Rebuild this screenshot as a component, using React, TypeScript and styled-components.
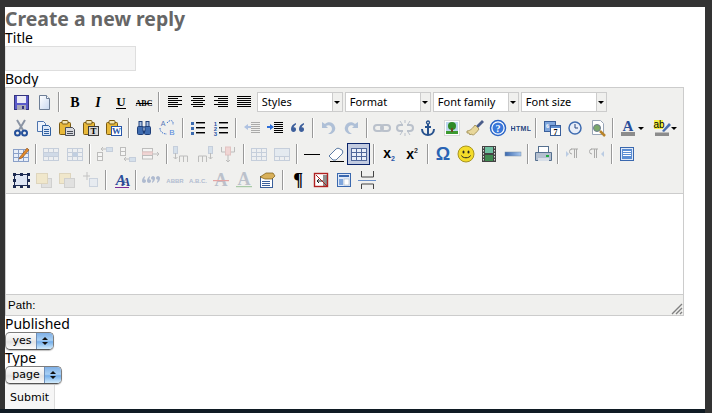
import React from "react";
import styled, { createGlobalStyle } from "styled-components";

const Global = createGlobalStyle`
  html, body { margin: 0; padding: 0; height: 413px; overflow: hidden; background: #333333; }
`;

const Screen = styled.div`
  width: 712px; height: 413px; box-sizing: border-box;
  display: flex; flex-direction: column;
  font-family: "Noto Sans", "DejaVu Sans", sans-serif; color: #000;
`;
const TopBand = styled.div`height: 7px; background: #333333; flex: none;`;
const Middle = styled.div`flex: 1; display: flex; min-height: 0;`;
const Gutter = styled.div<{ $w: number }>`width: ${p => p.$w}px; background: #333333; flex: none;`;
const Page = styled.main`
  flex: 1; background: #fff; display: flex; flex-direction: column; align-items: flex-start; min-width: 0;
  & > * { flex: none; }
`;
const BottomBand = styled.div`height: 4px; background: #101b24; flex: none; margin-right: 7px;`;

const Heading = styled.h1`
  margin: 0; height: 23px; font-size: 19.4px; line-height: 23px; font-weight: 700; color: #666;
`;
const Label = styled.label`display: block; font-size: 14px; line-height: 16px; height: 16px;`;
const TitleInput = styled.input`
  display: block; box-sizing: border-box; width: 131px; height: 25px; margin: 0;
  background: #f4f4f4; border: 1px solid #dedede; padding: 0;
`;
const Editor = styled.div`
  width: 679px; box-sizing: border-box; height: 229px;
  border: 1px solid #ccc; display: flex; flex-direction: column;
`;
const Toolbar = styled.div`
  background: #f0f0ee; height: 106px; flex: none; box-sizing: border-box;
  border-bottom: 1px solid #ccc; padding: 1px 0 0 3.4px;
`;
const Row = styled.div`display: flex; align-items: center; height: 26px;`;
const Btn = styled.span<{ $on?: boolean; $off?: boolean }>`
  width: 23.2px; height: 22px; flex: none; box-sizing: border-box;
  display: flex; align-items: center; justify-content: center;
  ${p => p.$on && "background: #c2cbe0; border: 1px solid #0a246a;"}
  svg { opacity: ${p => (p.$off ? 0.36 : 1)}; display: block; flex: none; }
`;
const Sep = styled.span`
  width: 2px; height: 20px; flex: none; margin: 0 2.6px 0 2.7px;
  border-left: 1px solid #999; border-right: 1px solid #fff; box-sizing: border-box;
`;
const Arrow = styled.span`
  width: 0; height: 0; flex: none; margin: 0 6px 0 -2px;
  border: 3px solid transparent; border-top: 3px solid #000; border-bottom: 0;
`;
const ListBox = styled.span`
  display: flex; width: 86px; height: 20px; flex: none; margin-left: 2px;
  ${Btn} + & { margin-left: 1px; }
`;
const ListText = styled.span`
  width: 76px; box-sizing: border-box; background: #fff; border: 1px solid #ccc;
  font-size: 11px; line-height: 18px; padding-left: 4px; white-space: nowrap; overflow: hidden;
`;
const ListOpen = styled.span`
  width: 10px; box-sizing: border-box; background: #f0f0ee; border: 1px solid #ccc; border-left: 0;
  display: flex; align-items: center; justify-content: center;
  &::after { content: ""; border: 3px solid transparent; border-top: 3px solid #000; border-bottom: 0; }
`;
const Canvas = styled.div`flex: 1; background: #fff;`;
const Status = styled.div`
  height: 21px; flex: none; background: #f0f0ee; border-top: 1px solid #ccc; box-sizing: border-box;
  display: flex; align-items: center; position: relative;
  font-family: "Liberation Sans", Arial, sans-serif; font-size: 11.5px; padding-left: 2px;
  letter-spacing: 0.15px;
`;
const Grip = styled.svg`position: absolute; right: 0; bottom: 0; display: block;`;
const AquaSelect = styled.span<{ $w: number }>`
  display: flex; width: ${p => p.$w}px; height: 18px; box-sizing: border-box;
  border-radius: 5px; border: 1px solid #7d7d7d; border-bottom-color: #555; overflow: hidden;
  background: linear-gradient(#fdfdfd, #ececec 45%, #e2e2e2 55%, #fbfbfb);
  box-shadow: 0 1px 1px rgba(0, 0, 0, 0.25);
  font-family: "DejaVu Sans", sans-serif; font-size: 11px;
`;
const AquaText = styled.span`flex: 1; text-align: center; line-height: 16px; padding-left: 2px;`;
const AquaStep = styled.span`
  width: 16px; flex: none; display: flex; flex-direction: column; align-items: center; justify-content: center; gap: 2px;
  background: linear-gradient(#7fb0e6, #a9d0f4 45%, #74aeea 55%, #d2ecfd);
  border-left: 1px solid #6f8fb8;
  &::before { content: ""; border: 3px solid transparent; border-bottom: 3px solid #111; border-top: 0; }
  &::after { content: ""; border: 3px solid transparent; border-top: 3px solid #111; border-bottom: 0; }
`;
const Submit = styled.button`
  width: 50px; height: 24px; margin: 1px 0 0; padding: 0; background: #f6f6f6; border: 0; border-right: 1px solid #dcdcdc;
  font-family: "DejaVu Sans", sans-serif; font-size: 11px; color: #000;
`;
const Glyph = styled.text<{ $f?: string }>`font-family: ${p => p.$f || '"Liberation Serif", serif'};`;
const SANS = '"Liberation Sans", sans-serif';

type IconBody = React.ReactNode;
const lines = (rows: [number, number, number][], c = "#000") =>
  rows.map(([x, y, w], i) => <rect key={i} x={x} y={y} width={w} height={1} fill={c} />);
const clipBoard = (
  <>
    <rect x="2.5" y="4.5" width="11" height="12" rx="1" fill="#e8b93a" stroke="#7a5a12" />
    <rect x="5" y="2.5" width="6" height="3.5" rx="1" fill="#f4e6b0" stroke="#7a5a12" />
  </>
);
const miniTable = (x: number, y: number, c = "#8aa0c8") => (
  <g stroke={c} fill="#fff">
    <rect x={x + 0.5} y={y + 0.5} width="15" height="12" fill="#e8eef8" />
    <path d={`M${x} ${y + 4.5}h16M${x} ${y + 8.5}h16M${x + 5.5} ${y}v13M${x + 10.5} ${y}v13`} fill="none" />
  </g>
);

const ICONS: Record<string, IconBody> = {
  save: (
    <>
      <rect x="3.5" y="3.5" width="14" height="14" fill="#5b5bc9" stroke="#34347e" />
      <rect x="6" y="4" width="9" height="7" fill="#ececf6" />
      <rect x="6" y="13" width="9" height="5" fill="#a9a9b6" />
      <rect x="11" y="14" width="2" height="3" fill="#34347e" />
    </>
  ),
  doc: (
    <>
      <path d="M5.5 3.5h7l3 3v11h-10z" fill="url(#docg)" stroke="#6d7e96" />
      <path d="M12.5 3.5v3h3" fill="#fff" stroke="#6d7e96" />
    </>
  ),
  bold: <Glyph x="10" y="15" fontSize="14" fontWeight="700" textAnchor="middle">B</Glyph>,
  italic: <Glyph x="10" y="15" fontSize="14" fontWeight="700" fontStyle="italic" textAnchor="middle">I</Glyph>,
  under: (
    <>
      <Glyph x="10" y="14" fontSize="13" fontWeight="700" textAnchor="middle">U</Glyph>
      <rect x="5" y="16" width="10" height="1" fill="#000" />
    </>
  ),
  strike: (
    <>
      <Glyph x="10" y="14" fontSize="8" textAnchor="middle" fontWeight="700">ABC</Glyph>
      <rect x="2" y="11" width="16" height="1" fill="#000" />
    </>
  ),
  left: <>{lines([[3, 4, 14], [3, 6, 10], [3, 8, 14], [3, 10, 10], [3, 12, 14], [3, 14, 10]])}</>,
  center: <>{lines([[3, 4, 14], [5, 6, 10], [3, 8, 14], [5, 10, 10], [3, 12, 14], [5, 14, 10]])}</>,
  right: <>{lines([[3, 4, 14], [7, 6, 10], [3, 8, 14], [7, 10, 10], [3, 12, 14], [7, 14, 10]])}</>,
  justify: <>{lines([[3, 4, 14], [3, 6, 14], [3, 8, 14], [3, 10, 14], [3, 12, 14], [3, 14, 14]])}</>,
  cut: (
    <g fill="none">
      <path d="M6 2l6 10M14 2L8 12" stroke="#8a94a4" strokeWidth="2" />
      <circle cx="6.5" cy="15" r="2.5" stroke="#24509a" strokeWidth="2" />
      <circle cx="13.5" cy="15" r="2.5" stroke="#24509a" strokeWidth="2" />
    </g>
  ),
  copy: (
    <>
      <path d="M3.5 3.5h6l2 2v8h-8z" fill="#eef3fb" stroke="#4d74ae" />
      <path d="M8.5 7.5h6l2 2v8h-8z" fill="#dce8f8" stroke="#30609f" />
      {lines([[10, 11, 5], [10, 13, 5], [10, 15, 5]], "#30609f")}
    </>
  ),
  paste: (
    <>
      {clipBoard}
      <path d="M8.5 9.5h7l2 2v6h-9z" fill="#d7d9de" stroke="#4a4e58" />
      {lines([[10, 13, 6], [10, 15, 6]], "#4a4e58")}
    </>
  ),
  pastet: (
    <>
      {clipBoard}
      <rect x="7.5" y="8.5" width="10" height="9" fill="#d7d7d7" stroke="#3c3c3c" />
      <Glyph x="12.5" y="16" fontSize="9" fontWeight="700" textAnchor="middle">T</Glyph>
    </>
  ),
  pastew: (
    <>
      {clipBoard}
      <rect x="7.5" y="8.5" width="10" height="9" fill="#fff" stroke="#2a56a8" />
      <Glyph x="12.5" y="16" fontSize="9" fontWeight="700" textAnchor="middle" fill="#2a56a8">W</Glyph>
    </>
  ),
  find: (
    <g stroke="#1f3f78">
      <rect x="3.5" y="8.5" width="6" height="8" fill="#3f6cb0" rx="1" />
      <rect x="10.5" y="8.5" width="6" height="8" fill="#3f6cb0" rx="1" />
      <rect x="5" y="3.5" width="3" height="5" fill="#a8c0e4" />
      <rect x="12" y="3.5" width="3" height="5" fill="#a8c0e4" />
      <rect x="9" y="9" width="2" height="4" fill="#dfe8f6" />
    </g>
  ),
  replace: (
    <>
      <Glyph x="6" y="8" fontSize="7" textAnchor="middle" fill="#5577b8" $f={SANS}>A</Glyph>
      <Glyph x="15" y="17" fontSize="8" textAnchor="middle" fill="#4f86dc" $f={SANS}>B</Glyph>
      <path d="M3 10c0 4 3 6 7 6M10 5c2-3 5-3 6-1v3" fill="none" stroke="#3f73cc" strokeDasharray="1.5 1" />
    </>
  ),
  ul: (
    <>
      {[4, 9, 14].map(y => <rect key={y} x="3" y={y} width="3" height="3" fill="#3c6bb0" />)}
      {lines([[8, 4, 9], [8, 9, 9], [8, 14, 9]])}
      {lines([[8, 5, 9], [8, 10, 9], [8, 15, 9]], "#888")}
    </>
  ),
  ol: (
    <>
      <Glyph x="4.5" y="8" fontSize="6" fontWeight="700" textAnchor="middle" fill="#2a56a8" $f={SANS}>1</Glyph>
      <Glyph x="4.5" y="13" fontSize="6" fontWeight="700" textAnchor="middle" fill="#2a56a8" $f={SANS}>2</Glyph>
      <Glyph x="4.5" y="18" fontSize="6" fontWeight="700" textAnchor="middle" fill="#2a56a8" $f={SANS}>3</Glyph>
      {lines([[8, 4, 9], [8, 9, 9], [8, 14, 9]])}
      {lines([[8, 5, 9], [8, 10, 9], [8, 15, 9]], "#888")}
    </>
  ),
  outdent: (
    <>
      {lines([[9, 4, 9], [9, 6, 9], [9, 8, 9], [9, 10, 9], [9, 12, 9], [9, 14, 9]], "#333")}
      <path d="M2 9l4-3v2h3v2H6v2z" fill="#3f73cc" />
    </>
  ),
  indent: (
    <>
      {lines([[9, 4, 9], [9, 6, 9], [9, 8, 9], [9, 10, 9], [9, 12, 9], [9, 14, 9]])}
      <path d="M9 9L5 6v2H2v2h3v2z" fill="#2f6fd8" />
    </>
  ),
  quote: (
    <path d="M8 5C5 6 3 8 3 11c0 2 1 3 2.5 3S8 13 8 11.5 7 9 5.5 9.500C6 8 7 7 8 6.500zM16 5c-3 1-5 3-5 6 0 2 1 3 2.500 3s2.500-1 2.500-2.500S15 9 13.500 9.500c.5-1.500 1.500-2.500 2.500-3z" fill="#3d5f9c" />
  ),
  undo: <path d="M4 4v6h6L8 8c3-2 6 0 6 3 0 2-2 4-4 5h3c3-1 5-4 4-7-1-5-7-6-10-3z" fill="#3f6db0" />,
  redo: <path d="M16 4v6h-6l2-2c-3-2-6 0-6 3 0 2 2 4 4 5H7C4 15 2 12 3 9c1-5 7-6 10-3z" fill="#3f6db0" />,
  link: (
    <g fill="none" stroke="#5c6f90" strokeWidth="2">
      <rect x="2" y="7" width="9" height="6" rx="3" />
      <rect x="9" y="7" width="9" height="6" rx="3" />
    </g>
  ),
  unlink: (
    <g fill="none" stroke="#5c6f90">
      <path d="M8 7H5a3 3 0 000 6h3M12 7h3a3 3 0 010 6h-3" strokeWidth="2" />
      <path d="M10 2v3M10 15v3M5 3l2 3M15 3l-2 3M5 17l2-3M15 17l-2-3" />
    </g>
  ),
  anchor: (
    <g fill="none" stroke="#27528e" strokeWidth="2">
      <circle cx="10" cy="4.500" r="1.500" strokeWidth="1.300" />
      <path d="M10 6v11M7 9h6M4 11c0 4 3 6 6 6s6-2 6-6" />
    </g>
  ),
  image: (
    <>
      <rect x="2.5" y="2.500" width="15" height="15" fill="#fff" stroke="#d8d8d8" />
      <rect x="4" y="4" width="12" height="12" fill="#bcd6ee" />
      <rect x="4" y="13" width="12" height="3" fill="#3c9a30" />
      <circle cx="10" cy="8" r="4" fill="#2f8b28" />
      <rect x="9" y="10" width="2" height="4" fill="#6a4a22" />
    </>
  ),
  clean: (
    <>
      <path d="M11 8l6-6 2 2-6 6z" fill="#4a5d8a" />
      <path d="M2 13c3 0 6-3 8-6l4 4c-2 3-5 6-6 6l-2-1-1 1-1-2-2 0z" fill="#e8d79a" stroke="#a89860" />
    </>
  ),
  help: (
    <>
      <circle cx="10" cy="10" r="7.500" fill="#fff" stroke="#2a64c6" strokeWidth="1.500" />
      <circle cx="10" cy="10" r="5.500" fill="#3a78da" />
      <Glyph x="10" y="14" fontSize="10" fontWeight="700" textAnchor="middle" fill="#fff">?</Glyph>
    </>
  ),
  html: <Glyph x="10" y="12.500" fontSize="7" fontWeight="700" textAnchor="middle" fill="#27457f" $f={SANS} letterSpacing="0.4">HTML</Glyph>,
  date: (
    <>
      <rect x="2.500" y="3.500" width="11" height="10" fill="#7fa6dc" stroke="#3a5f9a" />
      <rect x="8.500" y="7.500" width="10" height="10" fill="#fff" stroke="#3a5f9a" />
      <rect x="9" y="8" width="9" height="2" fill="#5f8fd0" />
      <Glyph x="13.500" y="17" fontSize="8" fontWeight="700" textAnchor="middle">7</Glyph>
      <Glyph x="5.500" y="10" fontSize="6" fontWeight="700" textAnchor="middle" fill="#fff">6</Glyph>
    </>
  ),
  time: (
    <>
      <circle cx="10" cy="10" r="6" fill="#e8eef8" stroke="#3f6cb0" strokeWidth="1.500" />
      <path d="M10 6v4h3" fill="none" stroke="#27457f" />
    </>
  ),
  preview: (
    <>
      <path d="M4.500 2.500h8l3 3v11h-11z" fill="#fff" stroke="#9aa6b8" />
      <circle cx="9" cy="10" r="3.500" fill="#7aa86a" stroke="#6d7c90" />
      <path d="M12 13l5 5" stroke="#b8842a" strokeWidth="2.500" />
    </>
  ),
  fore: (
    <>
      <Glyph x="10" y="13" fontSize="15" fontWeight="700" textAnchor="middle" fill="#2a4e9a">A</Glyph>
      <rect x="3" y="14" width="14" height="4" fill="#8c8c8c" />
    </>
  ),
  back: (
    <>
      <rect x="2" y="2" width="9" height="9" fill="#f4f040" />
      <Glyph x="7" y="10" fontSize="10" textAnchor="middle" $f={SANS}>ab</Glyph>
      <path d="M10 13l7-8 2 2-7 7z" fill="#4a6fae" />
      <rect x="3" y="14.500" width="14" height="3.500" fill="#8c8c8c" />
    </>
  ),
  tablecontrols: (
    <>
      {miniTable(2, 5)}
      <path d="M9 13L16 4l2 2-7 8-3 1z" fill="#e08a2a" stroke="#8a4a1a" strokeWidth="0.600" />
    </>
  ),
  rowprops: (
    <>
      {miniTable(2, 4, "#7a93bb")}
      <rect x="3" y="9" width="14" height="3" fill="#9ab6dc" />
    </>
  ),
  cellprops: (
    <>
      {miniTable(2, 4, "#7a93bb")}
      <rect x="8" y="9" width="5" height="3" fill="#6f96cc" />
    </>
  ),
  rowbefore: (
    <g stroke="#666" fill="#fff">
      <rect x="2.500" y="8.500" width="5" height="4" /><rect x="2.500" y="12.500" width="5" height="4" />
      <rect x="11.500" y="3.500" width="6" height="4" fill="#a8c4e8" stroke="#7a93bb" />
      <path d="M11 5H6M8 3L6 5l2 2" fill="none" />
    </g>
  ),
  rowafter: (
    <g stroke="#666" fill="#fff">
      <rect x="2.500" y="3.500" width="5" height="4" /><rect x="2.500" y="7.500" width="5" height="4" />
      <rect x="11.500" y="13.500" width="6" height="4" fill="#a8c4e8" stroke="#7a93bb" />
      <path d="M11 15H6M8 13l-2 2 2 2" fill="none" />
    </g>
  ),
  rowdel: (
    <g stroke="#666" fill="#fff">
      <rect x="1.500" y="4.500" width="10" height="3.500" /><rect x="1.500" y="8" width="10" height="3.500" fill="#f0a8a8" stroke="#c77" /><rect x="1.500" y="11.500" width="10" height="3.500" />
      <path d="M11 10h7M16 8l2 2-2 2" fill="none" />
    </g>
  ),
  colbefore: (
    <g stroke="#666" fill="#fff">
      <path d="M7.500 18v-6h4v6M11.500 12h4v6" fill="none" />
      <rect x="1.500" y="2.500" width="4" height="7" fill="#a8c4e8" stroke="#7a93bb" />
      <path d="M3.500 9v6M1.500 13l2 2 2-2" fill="none" />
    </g>
  ),
  colafter: (
    <g stroke="#666" fill="#fff">
      <path d="M3.500 18v-6h4v6M7.500 12h4v6" fill="none" />
      <rect x="13.500" y="2.500" width="4" height="7" fill="#a8c4e8" stroke="#7a93bb" />
      <path d="M15.500 9v6M13.500 13l2 2 2-2" fill="none" />
    </g>
  ),
  coldel: (
    <g stroke="#666" fill="none">
      <path d="M3.500 3v5h4M16.500 3v5h-4" />
      <rect x="7.500" y="3" width="5" height="8" fill="#f0a8a8" stroke="#c77" />
      <path d="M10 11v7M8 16l2 2 2-2" />
    </g>
  ),
  split: <>{miniTable(2, 4, "#7a93bb")}</>,
  merge: (
    <>
      {miniTable(2, 4, "#7a93bb")}
      <rect x="3" y="5" width="14" height="7" fill="#cfe0f4" />
    </>
  ),
  hr: <rect x="2" y="10" width="16" height="1" fill="#000" />,
  erase: (
    <>
      <path d="M3 12l7-7c1-1 3-1 4 0l2 1c1 1 1 3 0 4l-6 6H7z" fill="#fff" stroke="#5b7aa4" />
      <rect x="4" y="17" width="14" height="1" fill="#000" />
    </>
  ),
  aid: miniTable(2, 4, "#50679a"),
  sub: (
    <Glyph x="10" y="14" fontSize="14" fontWeight="700" textAnchor="middle" $f={SANS}>
      x<tspan fontSize="7" dy="3" fill="#2a56a8">2</tspan>
    </Glyph>
  ),
  sup: (
    <Glyph x="10" y="15" fontSize="14" fontWeight="700" textAnchor="middle" $f={SANS}>
      x<tspan fontSize="7" dy="-6" fill="#333">2</tspan>
    </Glyph>
  ),
  omega: <Glyph x="10" y="16" fontSize="18" fontWeight="700" textAnchor="middle" fill="#2a64b4" $f={SANS}>Ω</Glyph>,
  smile: (
    <>
      <circle cx="10" cy="10" r="8" fill="#f4dc2a" stroke="#a89520" />
      <ellipse cx="7.500" cy="8" rx="1" ry="1.500" fill="#222" />
      <ellipse cx="12.500" cy="8" rx="1" ry="1.500" fill="#222" />
      <path d="M5.500 11.500c1 3 8 3 9 0" fill="none" stroke="#222" />
    </>
  ),
  media: (
    <>
      <rect x="3" y="2" width="14" height="16" fill="#444" />
      <rect x="6" y="3" width="8" height="6" fill="#6fc0a0" />
      <rect x="6" y="11" width="8" height="6" fill="#3f8a50" />
      {[3, 6, 9, 12, 15].map(y => <React.Fragment key={y}><rect x="4" y={y} width="1" height="1.500" fill="#ddd" /><rect x="15" y={y} width="1" height="1.500" fill="#ddd" /></React.Fragment>)}
    </>
  ),
  print: (
    <>
      <rect x="5.500" y="2.500" width="10" height="6" fill="#fff" stroke="#56708f" />
      <path d="M2.500 8.500h16v8h-16z" fill="#b4c0d0" stroke="#56708f" />
      <rect x="5" y="14" width="11" height="3" fill="#d8dfe8" />
      <rect x="13" y="11" width="3" height="2" fill="#22aa44" />
    </>
  ),
  ltr: (
    <>
      <path d="M3 7l3 3-3 3z" fill="#5f8fd0" />
      <path d="M8 5h7M9 5a2.500 2.500 0 000 5M11.500 5v9M13.500 5v9" fill="none" stroke="#333" />
    </>
  ),
  rtl: (
    <>
      <path d="M17 7l-3 3 3 3z" fill="#5f8fd0" />
      <path d="M4 5h7M5 5a2.500 2.500 0 000 5M7.500 5v9M9.500 5v9" fill="none" stroke="#333" />
    </>
  ),
  full: (
    <>
      <rect x="3.500" y="3.500" width="13" height="13" fill="#dfe9f8" stroke="#3a68ae" />
      <rect x="5" y="5" width="10" height="10" fill="#5b8ed4" />
      {lines([[6, 7, 8], [6, 9, 8], [6, 11, 8]], "#fff")}
    </>
  ),
  box: (
    <>
      <rect x="3.500" y="4.500" width="13" height="11" fill="#dfe6f4" stroke="#1d2a50" />
      {[[2, 3], [9, 3], [16, 3], [2, 9], [16, 9], [2, 15], [9, 15], [16, 15]].map(([x, y]) => <rect key={`${x}${y}`} x={x} y={y} width="3" height="3" fill="#1d2a50" />)}
    </>
  ),
  front: (
    <>
      <rect x="7.500" y="8.500" width="10" height="9" fill="#c8c8c8" stroke="#999" />
      <rect x="2.500" y="3.500" width="11" height="10" fill="#f0d890" stroke="#c0a868" />
    </>
  ),
  backw: (
    <>
      <rect x="2.500" y="3.500" width="11" height="10" fill="#f0d890" stroke="#c0a868" />
      <rect x="7.500" y="8.500" width="10" height="9" fill="#c8c8c8" stroke="#999" />
    </>
  ),
  abs: (
    <>
      <path d="M2 6h7M6 2v8" stroke="#777" fill="none" />
      <rect x="8.500" y="8.500" width="8" height="8" fill="#d8e4f4" stroke="#8aa0c0" />
    </>
  ),
  style: (
    <>
      <Glyph x="10" y="15" fontSize="15" fontWeight="700" fontStyle="italic" fill="#2a4e9a" textAnchor="middle" letterSpacing="-4">
        A<tspan fontSize="13" dy="1" fill="#2a3e8a">A</tspan>
      </Glyph>
      <rect x="4" y="17" width="14" height="1" fill="#7a2a9a" />
    </>
  ),
  cite: (
    <>
      <path d="M7 6c-2 1-3 3-3 5 0 1 1 2 2 2s2-1 2-2-1-2-2-1.500L7 7zM12 6c-2 1-3 3-3 5 0 1 1 2 2 2s2-1 2-2-1-2-2-1.500L12 7z" fill="#3f5f9c" transform="translate(-3 0)" />
      <path d="M13 13c2-1 3-3 3-5 0-1-1-2-2-2s-2 1-2 2 1 2 2 1.500l-1 2.500zM18 13c2-1 3-3 3-5 0-1-1-2-2-2s-2 1-2 2 1 2 2 1.500l-1 2.500z" fill="#3f5f9c" transform="translate(-2 0)" />
    </>
  ),
  abbr: <Glyph x="10" y="12.500" fontSize="6" fontWeight="700" textAnchor="middle" fill="#3f5f9c" $f={SANS}>ABBR</Glyph>,
  acro: <Glyph x="10" y="12.500" fontSize="6" fontWeight="700" textAnchor="middle" fill="#3f5f9c" $f={SANS}>A.B.C.</Glyph>,
  del: (
    <>
      <Glyph x="10" y="16" fontSize="18" fontWeight="700" textAnchor="middle" fill="#5f6f90">A</Glyph>
      <rect x="2" y="10" width="16" height="1.200" fill="#d02020" />
    </>
  ),
  ins: (
    <>
      <Glyph x="10" y="15" fontSize="18" fontWeight="700" textAnchor="middle" fill="#5f6f90">A</Glyph>
      <rect x="2" y="16" width="16" height="1.200" fill="#2a8a2a" />
    </>
  ),
  attr: (
    <>
      <rect x="3.500" y="6.500" width="12" height="11" fill="#fff" stroke="#3a5f9a" />
      <path d="M3 7l6-4h7l2 3-3 3H8z" fill="#d8b05a" stroke="#7a5a12" strokeWidth="0.700" />
      {lines([[5, 11, 8], [5, 13, 8], [5, 15, 8]], "#3a5f9a")}
    </>
  ),
  para: <Glyph x="10" y="16" fontSize="18" fontWeight="700" textAnchor="middle">¶</Glyph>,
  nbsp: (
    <>
      <rect x="3.500" y="3.500" width="13" height="13" fill="#fff" stroke="#b02020" strokeWidth="1.400" />
      <path d="M6 11h6M8 9l-2 2 2 2M13 5v11M15 5v11" fill="none" stroke="#222" />
      <path d="M5 5l11 11" stroke="#b02020" />
    </>
  ),
  tmpl: (
    <>
      <rect x="3.500" y="3.500" width="13" height="13" fill="#dfe9f8" stroke="#3a68ae" />
      <rect x="5" y="5" width="10" height="2" fill="#3a68ae" />
      <rect x="5" y="9" width="4" height="6" fill="#7fa6dc" />
      <rect x="10" y="9" width="5" height="6" fill="#fff" stroke="#9ab" strokeWidth="0.500" />
    </>
  ),
  pagebreak: (
    <>
      <path d="M4.500 1v6h12V1M4.500 19v-5h12v5" fill="none" stroke="#444" />
      <rect x="1" y="10" width="18" height="1" fill="#6a8fc8" />
    </>
  ),
  advhr2: <rect x="2" y="8" width="16" height="4" fill="url(#hrg)" stroke="#7a8ea8" strokeWidth="0.500" />,
};

const Icon = ({ name }: { name: string }) => (
  <svg width="20" height="20" viewBox="0 0 20 20" aria-hidden="true">{ICONS[name]}</svg>
);

type Item = string;
const ROWS: Item[][] = [
  ["save", "doc", "|", "bold", "italic", "under", "strike", "|", "left", "center", "right", "justify", "@Styles", "@Format", "@Font family", "@Font size"],
  ["cut", "copy", "paste", "pastet", "pastew", "|", "find", "replace", "|", "ul", "ol", "|", "-outdent", "indent", "quote", "|", "-undo", "-redo", "|", "-link", "-unlink", "anchor", "image", "clean", "help", "html", "|", "date", "time", "preview", "|", "fore", "v", "back", "v"],
  ["tablecontrols", "|", "-rowprops", "-cellprops", "|", "-rowbefore", "-rowafter", "-rowdel", "|", "-colbefore", "-colafter", "-coldel", "|", "-split", "-merge", "|", "hr", "erase", "+aid", "|", "sub", "sup", "|", "omega", "smile", "media", "advhr2", "|", "print", "|", "-ltr", "-rtl", "|", "full"],
  ["box", "-front", "-backw", "-abs", "|", "style", "|", "-cite", "-abbr", "-acro", "-del", "-ins", "attr", "|", "para", "nbsp", "tmpl", "pagebreak"],
];

const renderItem = (item: Item, i: number) => {
  if (item === "|") return <Sep key={i} />;
  if (item === "v") return <Arrow key={i} />;
  if (item[0] === "@") return (
    <ListBox key={i}><ListText>{item.slice(1)}</ListText><ListOpen /></ListBox>
  );
  const off = item[0] === "-";
  const on = item[0] === "+";
  return <Btn key={i} $off={off} $on={on}><Icon name={off || on ? item.slice(1) : item} /></Btn>;
};

export default function App() {
  return (
    <Screen>
      <Global />
      <svg width="0" height="0" style={{ position: "absolute" }} aria-hidden="true">
        <defs>
          <linearGradient id="docg" x1="0" y1="0" x2="1" y2="1"><stop offset="0" stopColor="#fff" /><stop offset="1" stopColor="#c8d8f0" /></linearGradient>
          <linearGradient id="hrg" x1="0" y1="0" x2="1" y2="0"><stop offset="0" stopColor="#3a68ae" /><stop offset="1" stopColor="#a8c8f0" /></linearGradient>
        </defs>
      </svg>
      <TopBand />
      <Middle>
        <Gutter $w={5} />
        <Page>
          <Heading>Create a new reply</Heading>
          <Label>Title</Label>
          <TitleInput aria-label="Title" />
          <Label>Body</Label>
          <Editor>
            <Toolbar>
              {ROWS.map((r, i) => <Row key={i}>{r.map(renderItem)}</Row>)}
            </Toolbar>
            <Canvas />
            <Status>
              Path:
              <Grip width="12" height="12" viewBox="0 0 12 12" aria-hidden="true">
                <path d="M1 11L11 1M5 11L11 5M9 11l2-2" stroke="#808080" strokeWidth="1.400" fill="none" />
              </Grip>
            </Status>
          </Editor>
          <Label>Published</Label>
          <AquaSelect $w={49}><AquaText>yes</AquaText><AquaStep /></AquaSelect>
          <Label>Type</Label>
          <AquaSelect $w={57}><AquaText>page</AquaText><AquaStep /></AquaSelect>
          <Submit>Submit</Submit>
        </Page>
        <Gutter $w={7} />
      </Middle>
      <BottomBand />
    </Screen>
  );
}
